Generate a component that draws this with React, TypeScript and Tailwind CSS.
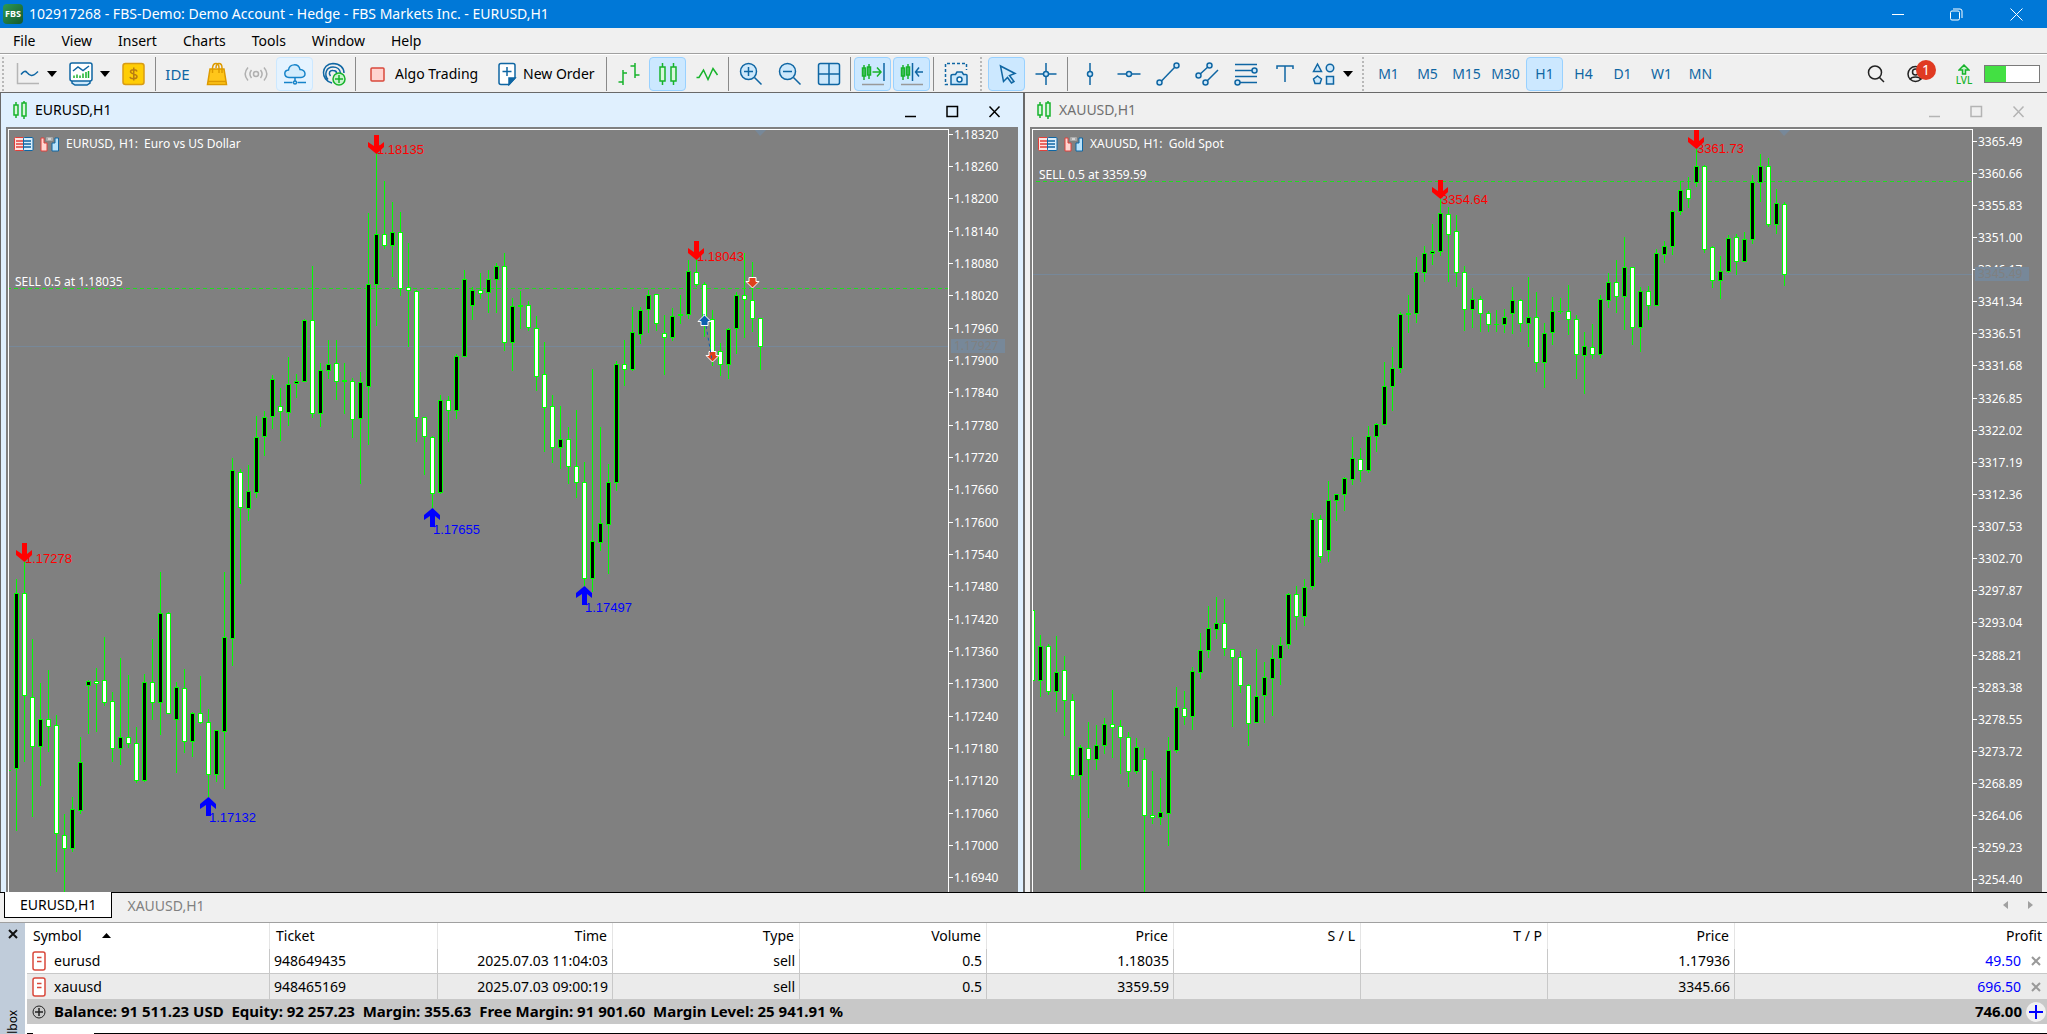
import type { ReactNode } from "react";
import clsx from "clsx";

const BLUE = "#0f66a3";
const SKY = "#cde8fb";
const GREEN = "#17b32b";

/* ---------- chart data ---------- */

type Candle = [high: number, top: number, bottom: number, low: number, kind: "u" | "d"];

const eurusd: Candle[] = [
  [579, 593, 769, 831, "u"], [562, 593, 696, 762, "d"], [639, 697, 747, 817, "d"], [683, 719, 747, 786, "u"],
  [670, 719, 727, 752, "d"], [715, 725, 834, 872, "d"], [814, 835, 849, 892, "d"], [797, 809, 849, 852, "u"],
  [737, 762, 811, 814, "u"], [680, 681, 686, 734, "u"], [668, 681, 684, 732, "d"], [637, 680, 703, 706, "d"],
  [692, 701, 749, 762, "d"], [658, 737, 749, 765, "u"], [675, 737, 744, 748, "d"], [727, 743, 781, 783, "d"],
  [674, 682, 781, 782, "u"], [639, 682, 703, 720, "d"], [572, 613, 703, 735, "u"], [612, 613, 714, 714, "d"],
  [682, 687, 720, 773, "u"], [669, 688, 742, 753, "d"], [712, 713, 742, 757, "u"], [676, 713, 723, 724, "d"],
  [709, 722, 775, 797, "d"], [730, 730, 775, 782, "u"], [572, 637, 732, 789, "u"], [458, 470, 639, 666, "u"],
  [469, 472, 508, 584, "d"], [465, 491, 509, 521, "u"], [416, 437, 493, 498, "u"], [411, 417, 437, 456, "u"],
  [375, 379, 417, 429, "u"], [388, 406, 412, 441, "d"], [357, 384, 413, 426, "u"], [374, 381, 384, 398, "u"],
  [319, 320, 382, 382, "u"], [266, 320, 414, 418, "d"], [363, 370, 414, 427, "u"], [340, 364, 371, 379, "u"],
  [340, 363, 382, 400, "d"], [363, 380, 382, 414, "u"], [378, 381, 420, 438, "d"], [372, 382, 419, 484, "u"],
  [213, 284, 387, 445, "u"], [153, 234, 285, 326, "u"], [181, 234, 246, 249, "d"], [202, 232, 246, 277, "u"],
  [212, 232, 289, 296, "d"], [243, 287, 291, 347, "d"], [290, 291, 418, 442, "d"], [417, 417, 437, 475, "d"],
  [436, 437, 494, 508, "d"], [395, 400, 493, 494, "u"], [396, 400, 411, 442, "d"], [354, 356, 411, 419, "u"],
  [270, 279, 357, 357, "u"], [287, 290, 306, 320, "u"], [273, 290, 294, 299, "d"], [270, 279, 293, 313, "u"],
  [263, 266, 280, 313, "u"], [253, 266, 343, 351, "d"], [298, 306, 343, 371, "u"], [291, 305, 307, 329, "u"],
  [301, 305, 328, 331, "d"], [316, 328, 377, 391, "d"], [342, 374, 408, 452, "d"], [395, 406, 448, 463, "d"],
  [406, 439, 448, 469, "u"], [427, 439, 467, 484, "d"], [410, 466, 483, 498, "d"], [462, 482, 579, 586, "d"],
  [369, 541, 579, 592, "u"], [427, 523, 543, 551, "u"], [464, 482, 525, 574, "u"], [361, 364, 483, 491, "u"],
  [340, 364, 370, 386, "d"], [307, 332, 370, 371, "u"], [307, 310, 335, 344, "u"], [290, 295, 310, 333, "u"],
  [294, 294, 324, 331, "d"], [315, 333, 338, 375, "d"], [308, 316, 338, 341, "u"], [295, 314, 316, 324, "u"],
  [260, 271, 315, 319, "u"], [260, 272, 285, 287, "d"], [282, 284, 319, 337, "d"], [310, 319, 353, 366, "d"],
  [343, 351, 365, 376, "d"], [328, 329, 365, 379, "u"], [292, 295, 329, 354, "u"], [253, 295, 300, 338, "d"],
  [262, 300, 319, 332, "d"], [318, 318, 347, 370, "d"],
];

const xauusd: Candle[] = [
  [610, 610, 681, 681, "d"], [635, 646, 681, 697, "u"], [644, 646, 692, 695, "d"], [636, 672, 692, 712, "u"],
  [656, 670, 701, 736, "d"], [694, 700, 776, 780, "d"], [745, 747, 776, 870, "u"], [722, 748, 760, 818, "d"],
  [725, 745, 760, 770, "u"], [718, 724, 746, 754, "u"], [690, 724, 728, 758, "d"], [720, 726, 738, 774, "d"],
  [732, 737, 772, 787, "d"], [738, 747, 772, 774, "u"], [748, 759, 816, 892, "d"], [771, 815, 818, 824, "d"],
  [778, 812, 818, 825, "u"], [737, 750, 814, 846, "u"], [687, 707, 751, 753, "u"], [691, 708, 717, 725, "d"],
  [667, 671, 717, 730, "u"], [633, 650, 673, 679, "u"], [606, 628, 651, 658, "u"], [597, 623, 630, 639, "u"],
  [599, 623, 649, 656, "d"], [649, 649, 658, 727, "d"], [651, 657, 686, 693, "d"], [684, 685, 724, 746, "d"],
  [649, 696, 723, 723, "u"], [662, 677, 696, 723, "u"], [645, 658, 679, 716, "u"], [637, 645, 659, 685, "u"],
  [593, 594, 645, 649, "u"], [586, 594, 617, 630, "d"], [579, 587, 617, 626, "u"], [513, 519, 587, 590, "u"],
  [515, 519, 557, 563, "d"], [481, 500, 551, 562, "u"], [494, 494, 501, 521, "u"], [477, 478, 495, 511, "u"],
  [437, 458, 480, 485, "u"], [448, 459, 471, 482, "d"], [426, 436, 471, 473, "u"], [423, 424, 437, 452, "u"],
  [362, 386, 425, 425, "u"], [347, 368, 387, 411, "u"], [312, 314, 369, 373, "u"], [295, 313, 315, 333, "u"],
  [257, 272, 314, 323, "u"], [246, 253, 273, 282, "u"], [224, 251, 254, 265, "u"], [199, 213, 252, 256, "u"],
  [207, 214, 235, 282, "d"], [215, 231, 273, 287, "d"], [266, 272, 310, 331, "d"], [288, 299, 310, 328, "u"],
  [296, 299, 314, 332, "d"], [311, 313, 325, 332, "d"], [310, 324, 325, 332, "u"], [309, 317, 325, 333, "u"],
  [287, 300, 314, 334, "u"], [299, 300, 324, 332, "d"], [277, 317, 324, 347, "u"], [292, 317, 363, 372, "d"],
  [323, 333, 363, 388, "u"], [297, 311, 333, 345, "u"], [298, 311, 312, 314, "u"], [285, 311, 320, 335, "d"],
  [315, 319, 355, 379, "d"], [332, 346, 356, 394, "u"], [324, 347, 355, 359, "d"], [295, 299, 355, 358, "u"],
  [273, 282, 301, 308, "u"], [260, 282, 297, 313, "d"], [237, 267, 297, 330, "u"], [267, 267, 328, 345, "d"],
  [287, 291, 328, 352, "u"], [286, 291, 306, 320, "d"], [249, 253, 306, 306, "u"], [241, 246, 255, 263, "u"],
  [210, 211, 247, 255, "u"], [181, 190, 212, 215, "u"], [177, 189, 199, 208, "d"], [149, 166, 183, 187, "u"],
  [165, 166, 250, 253, "d"], [246, 247, 281, 288, "d"], [256, 271, 281, 299, "u"], [235, 238, 272, 273, "u"],
  [234, 237, 262, 275, "d"], [232, 239, 262, 262, "u"], [175, 182, 240, 244, "u"], [154, 166, 183, 202, "u"],
  [158, 166, 225, 227, "d"], [189, 203, 225, 234, "u"], [202, 204, 275, 286, "d"],
];

const scale = (from: number, step: number, digits: number) =>
  Array.from({ length: 24 }, (_, i) => (from - step * i).toFixed(digits));

/* ---------- chart drawing ---------- */

const Candles = ({ data, start }: { data: Candle[]; start: number }) => (
  <g shapeRendering="crispEdges">
    {data.map(([high, top, bottom, low, kind], i) => {
      const x = start + i * 8;
      return (
        <g key={x}>
          <rect x={x} y={high} width="1" height={low - high} fill="#00ff00" />
          <rect x={x - 2} y={top} width="5" height={bottom - top} fill="#00ff00" />
          {bottom - top > 2 && (
            <rect x={x - 1} y={top + 1} width="3" height={bottom - top - 2} fill={kind === "u" ? "#000" : "#fff"} />
          )}
        </g>
      );
    })}
  </g>
);

const Swing = ({ x, y, up, label, labelY }: { x: number; y: number; up?: boolean; label: string; labelY: number }) => {
  const color = up ? "#0000ff" : "#ff0000";
  return (
    <g fill={color}>
      <text x={x + 1} y={labelY} className="font-['Liberation_Sans'] text-[13px]">
        {label}
      </text>
      <path
        transform={`translate(${x} ${y})`}
        d={up ? "M-2 19H3V8L8 12V7L0.500 0L-8 7V12L-2 8Z" : "M-2 -19H3V-8L8 -12V-7L0.500 0L-8 -7V-12L-2 -8Z"}
      />
    </g>
  );
};

const Deal = ({ x, y, buy }: { x: number; y: number; buy?: boolean }) => (
  <path
    transform={`translate(${x + 0.5} ${y})`}
    d={buy ? "M0 -6L6.500 0.500H3.500V4.500H-3.500V0.500H-6.500Z" : "M0 6L6.500 -0.500H3.500V-4.500H-3.500V-0.500H-6.500Z"}
    fill={buy ? "#0f5fb0" : "#e0401c"}
    stroke="#fff"
  />
);

const OneClickIcon = () => (
  <svg width="20" height="15" viewBox="0 0 20 15">
    <rect x="0.500" y="0.500" width="9.500" height="13" rx="1" fill="#ffe3e0" stroke="#e0403a" />
    <rect x="9.500" y="0.500" width="9.500" height="13" rx="1" fill="#d9eefc" stroke="#0f66a3" />
    <path d="M2 4H9M2 7H9M2 10H9" stroke="#e0403a" strokeWidth="1.500" />
    <path d="M10 4H17M10 7H17M10 10H17" stroke="#0f66a3" strokeWidth="1.500" />
  </svg>
);

const DepthIcon = () => (
  <svg width="20" height="15" viewBox="0 0 20 15">
    <path d="M1 1H4V6H7V14H1Z" fill="#ffd6d2" stroke="#e0403a" />
    <path d="M18.500 1H15V6H12V14H18.500Z" fill="#b9e2fb" stroke="#0f66a3" />
    <rect x="6" y="0" width="7" height="4" rx="1" fill="#aaa" />
    <path d="M8 2H11" stroke="#fff" />
  </svg>
);

type ChartProps = {
  origin: number;
  data: Candle[];
  start: number;
  title: string;
  order: string;
  orderY: number;
  price: string;
  priceY: number;
  marker: number;
  labels: string[];
  axisClass: string;
  tagClass: string;
  children: ReactNode;
};

const Chart = (p: ChartProps) => (
  <div className="flex min-h-0 flex-1 bg-[#808080] pl-0.5 font-['Noto_Sans',sans-serif] text-xs text-white">
    <div className="relative mt-0.5 min-w-0 flex-1 overflow-hidden border-x border-t border-white">
      <svg className="block h-full w-full" role="img" aria-label={p.title}>
        <g transform={`translate(${-p.origin} -130)`}>
          <path d={`M0 ${p.priceY + 0.5}H2047`} stroke="#778899" />
          <path d={`M0 ${p.orderY + 0.5}H2047`} stroke="#1fdc1f" strokeDasharray="4 3" />
          <Candles data={p.data} start={p.start} />
          <text x={p.origin + 6} y={p.orderY - 2} fill="#fff">
            {p.order}
          </text>
          <path d={`M${p.marker - 5} 130H${p.marker + 6}L${p.marker} 136Z`} fill="#778899" />
          {p.children}
        </g>
      </svg>
      <div className="absolute top-1.5 left-[5px] flex items-center gap-1.5 whitespace-pre">
        <OneClickIcon />
        <DepthIcon />
        <span className="leading-4">{p.title}</span>
      </div>
    </div>
    <div className={clsx("relative flex w-[69px] flex-col justify-between", p.axisClass)}>
      {p.labels.map((l) => (
        <div key={l} className="flex h-3.5 items-center gap-px">
          <span className="h-px w-1 bg-white" />
          <span className="pt-px leading-none">{l}</span>
        </div>
      ))}
      <div className={clsx("absolute left-0.5 flex h-3.5 w-[54px] items-center bg-[#778899] pl-[3px] leading-none text-[#808080]", p.tagClass)}>
        {p.price}
      </div>
    </div>
  </div>
);

const CandleGlyph = () => (
  <svg width="16" height="20" viewBox="0 0 16 20" fill="#d8f7dc" stroke={GREEN} strokeWidth="1.500">
    <path d="M4 2V18M12 1V19" />
    <rect x="2" y="5" width="4" height="10" />
    <rect x="10" y="3" width="4" height="13" />
  </svg>
);

const ChartWindow = ({ name, active, children }: { name: string; active?: boolean; children: ReactNode }) => (
  <section
    className={clsx(
      "flex min-w-0 flex-1 flex-col",
      active ? "border-l border-[#696969] bg-[#e0f0fe] pr-1 pl-[5px]" : "bg-[#f0f0f0] px-[5px]",
    )}
  >
    <header className={clsx("flex h-[34px] shrink-0 items-center pl-1.5", active ? "text-black" : "text-[#707070]")}>
      <CandleGlyph />
      <h2 className="ml-[7px] flex-1 text-sm">{name}</h2>
      <div className={clsx("flex pt-0.5 pr-[3px]", active ? "text-black" : "text-[#b4b4b4]")}>
        <button aria-label="Minimize" className="flex h-6 w-[42px] items-center justify-center">
          <svg width="13" height="13" stroke="currentColor" fill="none" strokeWidth="1.500"><path d="M1 11.500H12" /></svg>
        </button>
        <button aria-label="Maximize" className="flex h-6 w-[42px] items-center justify-center">
          <svg width="13" height="13" stroke="currentColor" fill="none" strokeWidth="1.500"><rect x="1" y="1.500" width="10.500" height="10" /></svg>
        </button>
        <button aria-label="Close" className="flex h-6 w-[42px] items-center justify-center">
          <svg width="13" height="13" stroke="currentColor" fill="none" strokeWidth="1.500"><path d="M1.500 1.500L11.500 12M11.500 1.500L1.500 12" /></svg>
        </button>
      </div>
    </header>
    {children}
  </section>
);

/* ---------- toolbar ---------- */

const Sep = () => (
  <span className="flex h-[34px] w-[5px] shrink-0 justify-center">
    <span className="w-px bg-[#8a8a8a]" />
  </span>
);

const Grip = () => (
  <span className="flex h-[34px] w-3 shrink-0 justify-center">
    <span className="border-l-2 border-dotted border-[#b8b8b8]" />
  </span>
);

const Tool = ({ label, on, hover, children }: { label: string; on?: boolean; hover?: boolean; children: ReactNode }) => (
  <button
    aria-label={label}
    className={clsx(
      "mx-px flex h-[34px] w-[37px] shrink-0 items-center justify-center rounded-sm border",
      on ? "border-[#99d1ff] bg-[#cce8ff]" : hover ? "border-[#cce8ff] bg-[#e5f3ff]" : "border-transparent",
    )}
  >
    {children}
  </button>
);

const Caret = ({ label }: { label: string }) => (
  <button aria-label={label} className="flex h-[34px] w-3.5 shrink-0 items-center">
    <svg width="10" height="6"><path d="M0 0H10L5 6Z" /></svg>
  </button>
);

const Icon = ({ children, color = BLUE, fill = "none" }: { children: ReactNode; color?: string; fill?: string }) => (
  <svg width="24" height="24" viewBox="0 0 24 24" fill={fill} stroke={color} strokeWidth="1.500">
    {children}
  </svg>
);

const Toolbar = () => (
  <div className="flex h-[38px] items-center border-b border-[#696969] pt-px">
    <span className="flex h-[34px] w-2 shrink-0 pl-0.5"><span className="border-l-2 border-dotted border-[#b8b8b8]" /></span>
    <Tool label="New chart">
      <Icon>
        <path d="M1.500 1V21.500H23" stroke="#b5b5b5" />
        <path d="M5 12.500C7 10 9 8 11 10.500C14 14 16 15.500 22 9.500" />
      </Icon>
    </Tool>
    <Caret label="New chart options" />
    <Tool label="Profiles">
      <Icon>
        <path d="M3 18V21L6 23H18L21 21V18Z" fill={SKY} />
        <rect x="1" y="1" width="22" height="18" rx="2" fill="#fff" />
        <path d="M4 9L9 5L14 8.500L20 4" />
        <path d="M5 16V13.500M8 16V12.500M11 16V13.500M14 16V11.500M17 16V10M19.500 16V9" stroke={GREEN} />
      </Icon>
    </Tool>
    <Caret label="Profile options" />
    <Tool label="Deposit">
      <Icon color="#d99c12">
        <rect x="1" y="1.500" width="21" height="21" rx="2.500" fill="#ffcd05" />
        <path d="M15 9.500C14.500 7 8.500 7 8.500 9.800C8.500 12.300 15 11.500 15 14.500C15 17.500 8.500 17.300 8 14.800M11.750 5.500V18.500" stroke="#b97c12" />
      </Icon>
    </Tool>
    <Sep />
    <Tool label="IDE"><span className="text-[15px] text-[#0f66a3]">IDE</span></Tool>
    <Tool label="Market">
      <Icon color="#dd9a00">
        <path d="M5 7H19L21.500 22.500H2.500Z" fill="#ffc61a" />
        <path d="M7.500 11V6C8 0 14 0 14 6V11M11 6C11 0 17 0 17 6V11" />
        <path d="M3 19.500H21" />
      </Icon>
    </Tool>
    <Tool label="Signals">
      <Icon color="#b0b0b0">
        <circle cx="12" cy="12" r="2.500" />
        <path d="M7.500 8C5.500 10.500 5.500 13.500 7.500 16M16.500 8C18.500 10.500 18.500 13.500 16.500 16M4 5.500C0.500 9.500 0.500 14.500 4 18.500M20 5.500C23.500 9.500 23.500 14.500 20 18.500" />
      </Icon>
    </Tool>
    <Tool label="Virtual hosting" hover>
      <Icon color="#1683c9">
        <path d="M6 15.500C0.500 15 0.500 8.500 5.500 8C6.500 1.500 15.500 1 17 7.500C23.500 8 23.500 15.500 18 15.500Z" fill="#d3ecfc" />
        <path d="M12 15.500V19M1 20.500H9.500M14.500 20.500H23" />
        <circle cx="12" cy="20.500" r="1.500" fill="#fff" />
      </Icon>
    </Tool>
    <Tool label="VPS">
      <Icon>
        <path d="M10 21C-2 18 -1 2 11 1.500C18 1.500 22 6 22 11M6 17.500C1.500 12 4.500 5 11 5C15 5 18 7.500 18.500 11M8.500 14C6 11 8 8 11 8.500C13 8.500 14.500 9.500 14.500 11" />
        <circle cx="17" cy="17" r="6" fill="#c9f3ce" stroke={GREEN} />
        <path d="M17 13V21M13 17H21" stroke={GREEN} />
      </Icon>
    </Tool>
    <Sep />
    <button className="flex h-[34px] w-[131px] shrink-0 items-center gap-2.5 pl-3 text-sm whitespace-nowrap">
      <svg width="15" height="15"><rect x="1" y="1" width="13" height="13" rx="1" fill="#ffd3cf" stroke="#d9483b" strokeWidth="1.500" /></svg>
      Algo Trading
    </button>
    <button className="flex h-[34px] w-[115px] shrink-0 items-center gap-1.5 pl-2 text-sm whitespace-nowrap">
      <svg width="20" height="24" viewBox="0 0 20 24" fill="#fff" stroke={BLUE} strokeWidth="1.500">
        <path d="M4 1.500H16Q18 1.500 18 3.500V16L12 22.500H4Q2 22.500 2 20.500V3.500Q2 1.500 4 1.500Z" />
        <path d="M18 16H12V22.500Z" fill={BLUE} />
        <path d="M10 5V14M5.500 9.500H14.500" />
      </svg>
      New Order
    </button>
    <Sep />
    <Tool label="Bar chart">
      <Icon color={GREEN}><path d="M6 8V23M1.500 20H6M6 11H10M18 1V16M13.500 4H18M18 13H22.500" /></Icon>
    </Tool>
    <Tool label="Candlesticks" on><Icon color={GREEN} fill="#d8f7dc"><path d="M6.500 1V23M17.500 1V23" /><rect x="4" y="5" width="5" height="14" /><rect x="15" y="5" width="5" height="14" /></Icon></Tool>
    <Tool label="Line chart"><Icon color={GREEN}><path d="M1.500 15.500H4L8.500 8L13 17.500L18 6.500L22.500 13" /></Icon></Tool>
    <Sep />
    <Tool label="Zoom in"><Icon><circle cx="9.500" cy="9.500" r="8" fill={SKY} /><path d="M15.500 15.500L22.500 22.500M9.500 5V14M5 9.500H14" /></Icon></Tool>
    <Tool label="Zoom out"><Icon><circle cx="9.500" cy="9.500" r="8" fill={SKY} /><path d="M15.500 15.500L22.500 22.500M5 9.500H14" /></Icon></Tool>
    <Tool label="Tile windows"><Icon><rect x="1.500" y="1.500" width="21" height="21" rx="2" fill={SKY} /><path d="M12 1.500V22.500M1.500 12H22.500" /></Icon></Tool>
    <Sep />
    <Tool label="Auto scroll" on>
      <Icon><g stroke={GREEN}><path d="M3 3V18M8 2V17" /><rect x="1.500" y="6" width="3" height="8" /><rect x="6.500" y="5" width="3" height="8" /><path d="M11.500 10H20M16 5.500L20 10L16 14.500" /></g><path d="M23 1V19" /><path d="M1 22.500H23" stroke="#999" /></Icon>
    </Tool>
    <Tool label="Chart shift" on>
      <Icon><g stroke={GREEN}><path d="M3 3V18M8 2V17" /><rect x="1.500" y="6" width="3" height="8" /><rect x="6.500" y="5" width="3" height="8" /></g><path d="M12.500 1V19M23 10H15.500M19 5.500L15.500 10L19 14.500" /><path d="M1 22.500H23" stroke="#999" /></Icon>
    </Tool>
    <Sep />
    <Tool label="Screenshot">
      <Icon>
        <path d="M4 22.500H1.500V1.500H22.500V8" strokeDasharray="3 2" />
        <path d="M9 12.500H11.500L13 10H18L19.500 12.500H22Q23 12.500 23 13.500V22.500H7V14Q7 12.500 9 12.500Z" fill={SKY} />
        <circle cx="15.500" cy="17.500" r="2.500" fill="#fff" />
      </Icon>
    </Tool>
    <Grip />
    <Tool label="Cursor" on><Icon><path d="M5.500 4L20 11.500L14.500 13.500L19 19.500L16.500 21L12.500 15.500L8.500 19.500Z" fill={SKY} /></Icon></Tool>
    <Tool label="Crosshair"><Icon><path d="M12 1V9M12 15V23M1.500 12H9M15 12H22.500" /><circle cx="12" cy="12" r="2.500" fill={SKY} /></Icon></Tool>
    <Sep />
    <Tool label="Vertical line"><Icon><path d="M12 1V23" /><circle cx="12" cy="12" r="2.500" fill={SKY} /></Icon></Tool>
    <Tool label="Horizontal line"><Icon><path d="M0.500 12H23.500" /><circle cx="12" cy="12" r="2.500" fill={SKY} /></Icon></Tool>
    <Tool label="Trendline"><Icon><path d="M5 19.500L19 5" /><circle cx="3.500" cy="20.500" r="2.500" fill={SKY} /><circle cx="20.500" cy="3.500" r="2.500" fill={SKY} /></Icon></Tool>
    <Tool label="Channel"><Icon><path d="M3.500 13.500L14.500 3.500M10.500 20.500L23 8" /><circle cx="3.500" cy="13.500" r="2.500" fill={SKY} /><circle cx="14.500" cy="3.500" r="2.500" fill={SKY} /><circle cx="10.500" cy="20.500" r="2.500" fill={SKY} /></Icon></Tool>
    <Tool label="Fibonacci"><Icon><path d="M1 2.500H23M1 8.500H18M1 14.500H23M6 20.500H23" /><circle cx="20.500" cy="8.500" r="2.500" fill={SKY} /><circle cx="3.500" cy="20.500" r="2.500" fill={SKY} /></Icon></Tool>
    <Tool label="Text"><Icon><path d="M4 7V4H20V7M12 4V20" /></Icon></Tool>
    <Tool label="Shapes"><Icon fill={SKY}><path d="M5.500 2L9.500 9.500H1.500Z" /><circle cx="18" cy="6" r="3.750" /><path d="M5.500 14L9.500 17L8 21.500H3L1.500 17Z" /><rect x="14.500" y="14.500" width="7" height="7.500" /></Icon></Tool>
    <Caret label="More shapes" />
    <Grip />
    {["M1", "M5", "M15", "M30", "H1", "H4", "D1", "W1", "MN"].map((tf) => (
      <Tool key={tf} label={tf} on={tf === "H1"}><span className="text-sm text-[#0f66a3]">{tf}</span></Tool>
    ))}
    <div className="ml-auto flex items-center pr-[7px]">
      <button aria-label="Search" className="flex w-10 justify-center">
        <svg width="18" height="18" fill="none" stroke="#222" strokeWidth="1.500"><circle cx="8" cy="7.500" r="6.500" /><path d="M12.500 12.500L17 17" /></svg>
      </button>
      <button aria-label="Account, 1 notification" className="relative ml-0.5 flex w-9 justify-center">
        <svg width="18" height="18" fill="none" stroke="#222" strokeWidth="1.500"><circle cx="8.500" cy="9" r="7.500" /><circle cx="8.500" cy="7" r="3" /><path d="M3 14.500C4.500 11 12.500 11 14 14.500" /></svg>
        <span className="absolute -top-[5px] left-[18px] flex size-5 items-center justify-center rounded-full bg-[#e03a22] text-sm text-white">1</span>
      </button>
      <button aria-label="Level" className="ml-[17px] flex w-[26px] flex-col items-center text-[#17b32b]">
        <svg width="12" height="11" fill="#c9f3ce" stroke={GREEN} strokeWidth="1.500"><path d="M6 1L11 6H7.500V10H4.500V6H1Z" /></svg>
        <span className="text-[10px] leading-[10px] font-medium">LVL</span>
      </button>
      <div className="ml-[7px] flex h-[18px] w-14 border border-[#7a7a7a] bg-white" role="meter" aria-label="Connection" aria-valuenow={38}>
        <span className="w-[38%] bg-[#43e043]" />
      </div>
    </div>
  </div>
);

/* ---------- toolbox ---------- */

const positions = [
  { symbol: "eurusd", ticket: "948649435", time: "2025.07.03 11:04:03", open: "1.18035", price: "1.17936", profit: "49.50" },
  { symbol: "xauusd", ticket: "948465169", time: "2025.07.03 09:00:19", open: "3359.59", price: "3345.66", profit: "696.50" },
];

const num = "border-l border-[#c8c8c8] pr-1 text-right";
const head = "border-l border-[#e5e5e5] pr-[5px] text-right font-normal";

const Toolbox = () => (
  <div className="flex h-[112px] shrink-0 border-t border-[#a0a0a0] bg-white text-sm">
    <aside className="mr-0.5 flex w-[25px] flex-col items-center overflow-hidden bg-[#c0ccda]">
      <button aria-label="Close toolbox" className="mt-[5px] shrink-0">
        <svg width="12" height="12" stroke="#111" strokeWidth="2"><path d="M2 2L10 10M10 2L2 10" /></svg>
      </button>
      <span className="mt-[70px] shrink-0 rotate-180 text-xs leading-4 [writing-mode:vertical-rl]">Toolbox</span>
    </aside>
    <div className="flex min-w-0 flex-1 flex-col">
      <table className="w-full table-fixed border-separate border-spacing-0">
        <colgroup>
          <col className="w-[242px]" />
          <col className="w-[168px]" />
          <col className="w-[175px]" />
          <col span={6} className="w-[187px]" />
          <col />
        </colgroup>
        <thead>
          <tr className="h-[26px]">
            <th className="pl-1.5 text-left font-normal">
              Symbol
              <svg width="9" height="5" className="mb-1 ml-5 inline"><path d="M0 5H9L4.500 0Z" /></svg>
            </th>
            <th className="border-l border-[#e5e5e5] pl-1.5 text-left font-normal">Ticket</th>
            <th className={head}>Time</th>
            <th className={head}>Type</th>
            <th className={head}>Volume</th>
            <th className={head}>Price</th>
            <th className={head}>S / L</th>
            <th className={head}>T / P</th>
            <th className={head}>Price</th>
            <th className={head}>Profit</th>
          </tr>
        </thead>
        <tbody className="leading-5">
          {positions.map((p, i) => (
            <tr key={p.ticket} className={clsx("h-[25px]", i === 1 ? "bg-[#ebebeb]" : "[&>td]:border-b [&>td]:border-[#c8c8c8]")}>
              <td>
                <div className="flex items-center gap-2 pl-[5px]">
                  <svg width="14" height="20" fill="#fff" stroke="#d9483b" strokeWidth="1.500"><rect x="1" y="1" width="12" height="18" rx="2" /><path d="M5 6.500H9.500M5 10.500H9.500" /></svg>
                  {p.symbol}
                </div>
              </td>
              <td className="border-l border-[#c8c8c8] pl-1">{p.ticket}</td>
              <td className={num}>{p.time}</td>
              <td className={num}>sell</td>
              <td className={num}>0.5</td>
              <td className={num}>{p.open}</td>
              <td className={num} />
              <td className={num} />
              <td className={num}>{p.price}</td>
              <td className={num}>
                <div className="flex items-center justify-end gap-2.5 pr-0.5 text-[#0000ff]">
                  {p.profit}
                  <button aria-label={`Close ${p.symbol}`}>
                    <svg width="10" height="10" stroke="#999" strokeWidth="2"><path d="M1 1L9 9M9 1L1 9" /></svg>
                  </button>
                </div>
              </td>
            </tr>
          ))}
        </tbody>
      </table>
      <div className="flex h-[25px] items-center gap-2 bg-[#c8c8c8] pr-px pl-[5px] text-[15px] font-bold">
        <svg width="14" height="14" fill="none" stroke="#222"><circle cx="7" cy="7" r="6" /><path d="M7 3V11M3 7H11" strokeWidth="1.500" /></svg>
        <span className="flex-1 whitespace-pre">
          {"Balance: 91 511.23 USD  Equity: 92 257.23  Margin: 355.63  Free Margin: 91 901.60  Margin Level: 25 941.91 %"}
        </span>
        <span>746.00</span>
        <button aria-label="Add" className="-ml-1 flex size-5 items-center justify-center rounded-full bg-[#f0f0f0]">
          <svg width="14" height="14" stroke="#0000ff" strokeWidth="2"><path d="M7 0V14M0 7H14" /></svg>
        </button>
      </div>
      <div className="flex flex-1 items-end">
        <span className="h-px w-1.5 bg-black" />
        <span className="ml-[61px] h-px flex-1 bg-black" />
      </div>
    </div>
  </div>
);

/* ---------- page ---------- */

export default function App() {
  return (
    <div className="flex h-screen flex-col overflow-hidden bg-[#f0f0f0] font-['Noto_Sans',sans-serif] text-black">
      <header className="flex h-7 shrink-0 items-center bg-[#0078d7] pr-px pl-[3px] text-sm text-white">
        <span className="flex size-5 items-center justify-center rounded-sm bg-gradient-to-br from-[#2f9a55] to-[#14592c] text-[9px] font-bold">FBS</span>
        <h1 className="ml-1.5 flex-1">102917268 - FBS-Demo: Demo Account - Hedge - FBS Markets Inc. - EURUSD,H1</h1>
        <div className="flex">
          <button aria-label="Minimize" className="flex h-7 w-[58px] items-center justify-center"><svg width="13" height="13" stroke="#fff"><path d="M0 6.500H12" /></svg></button>
          <button aria-label="Restore" className="flex h-7 w-[59px] items-center justify-center"><svg width="13" height="13" stroke="#fff" fill="none"><rect x="0.500" y="3" width="9" height="9" rx="1.500" /><path d="M3 1H10Q12 1 12 3V10" /></svg></button>
          <button aria-label="Close" className="flex h-7 w-[60px] items-center justify-center"><svg width="13" height="13" stroke="#fff"><path d="M0.500 0.500L12.500 12.500M12.500 0.500L0.500 12.500" /></svg></button>
        </div>
      </header>
      <nav className="flex h-[26px] shrink-0 items-center border-b border-[#a0a0a0] text-sm">
        {["File", "View", "Insert", "Charts", "Tools", "Window", "Help"].map((m) => (
          <button key={m} className="px-[13px]">{m}</button>
        ))}
      </nav>
      <div className="shrink-0 border-t border-white"><Toolbar /></div>

      <main className="flex min-h-0 flex-1">
        <ChartWindow name="EURUSD,H1" active>
          <Chart
            origin={9}
            data={eurusd}
            start={16}
            title="EURUSD, H1:  Euro vs US Dollar"
            order="SELL 0.5 at 1.18035"
            orderY={288}
            price="1.17927"
            priceY={346}
            marker={760}
            labels={scale(1.1832, 0.0006, 5)}
            axisClass="pb-[7px]"
            tagClass="top-[212px]"
          >
            <rect x="9" y="770" width="2" height="1" fill="#00ff00" />
            <Swing x={24} y={562} label="1.17278" labelY={563} />
            <Swing x={376} y={154} label="1.18135" labelY={154} />
            <Swing x={696} y={260} label="1.18043" labelY={261} />
            <Swing x={208} y={797} label="1.17132" labelY={822} up />
            <Swing x={432} y={508} label="1.17655" labelY={534} up />
            <Swing x={584} y={586} label="1.17497" labelY={612} up />
            <Deal x={752} y={282} />
            <Deal x={712} y={356} />
            <path d="M704 314L712 360" stroke="#0f5fb0" strokeDasharray="3 3" />
            <Deal x={704} y={321} buy />
          </Chart>
        </ChartWindow>
        <div className="w-[3px] shrink-0 border-l border-[#e0f0fe] bg-[#696969]" />
        <ChartWindow name="XAUUSD,H1">
          <Chart
            origin={1033}
            data={xauusd}
            start={1032}
            title="XAUUSD, H1:  Gold Spot"
            order="SELL 0.5 at 3359.59"
            orderY={181}
            price="3345.49"
            priceY={274}
            marker={1784}
            labels={scale(3365.49, 4.83, 2)}
            axisClass="pt-[7px] pb-[5px]"
            tagClass="top-[140px]"
          >
            <Swing x={1440} y={199} label="3354.64" labelY={204} />
            <Swing x={1696} y={149} label="3361.73" labelY={153} />
          </Chart>
        </ChartWindow>
      </main>

      <div className="flex h-[30px] shrink-0 border-t border-black text-sm">
        <button className="-mt-px ml-1 h-[26px] border-x border-b border-black bg-white px-[15px]">EURUSD,H1</button>
        <button className="h-[26px] px-[15px] text-[#808080]">XAUUSD,H1</button>
        <div className="ml-auto flex items-start gap-5 pt-2 pr-3.5">
          <button aria-label="Scroll tabs left"><svg width="5" height="8" fill="#a0a0a0"><path d="M5 0V8L0 4Z" /></svg></button>
          <button aria-label="Scroll tabs right"><svg width="5" height="8" fill="#a0a0a0"><path d="M0 0V8L5 4Z" /></svg></button>
        </div>
      </div>
      <Toolbox />
    </div>
  );
}
